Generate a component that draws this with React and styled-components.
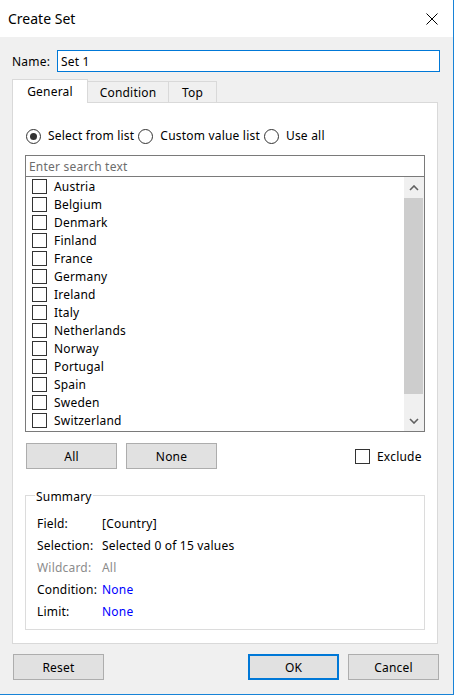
import React from 'react';
import styled, { createGlobalStyle } from 'styled-components';

const GlobalStyle = createGlobalStyle`
  * { box-sizing: border-box; }
  body {
    margin: 0;
    overflow: hidden;
    font-family: "Noto Sans", "Open Sans", sans-serif;
    font-size: 12px;
    letter-spacing: 0.2px;
    color: #000;
  }
`;

const Window = styled.div`
  width: 454px;
  height: 695px;
  display: flex;
  flex-direction: column;
  border-right: 1px solid #1883d7;
  border-bottom: 1px solid #1883d7;
  background: #f0f0f0;
`;

const TitleBar = styled.div`
  height: 37px;
  flex: none;
  background: #fff;
  display: flex;
  align-items: center;
  justify-content: space-between;
  padding: 0 15px 0 8px;
`;

const Title = styled.div`
  font-size: 14px;
  letter-spacing: 0;
  line-height: 20px;
  margin-top: 1px;
`;

const Body = styled.div`
  flex: 1;
  display: flex;
  flex-direction: column;
  padding-left: 12px;
`;

const NameRow = styled.div`
  margin-top: 13px;
  height: 22px;
  display: flex;
  align-items: center;
`;

const Label = styled.span`
  width: 45px;
  line-height: 16px;
  padding-top: 2px;
`;

const NameInput = styled.div`
  width: 383px;
  height: 22px;
  border: 1px solid #0078d7;
  background: #fff;
  padding: 1px 0 0 3px;
  line-height: 19px;
`;

const TabStrip = styled.div`
  margin-top: 7px;
  height: 24px;
  margin-bottom: -1px;
  display: flex;
  align-items: flex-end;
  position: relative;
  z-index: 1;
`;

const Tab = styled.div`
  width: ${p => p.w}px;
  height: ${p => (p.active ? 24 : 22)}px;
  margin-left: ${p => (p.first ? 0 : -1)}px;
  border: 1px solid #d9d9d9;
  border-bottom: ${p => (p.active ? 'none' : '1px solid #d9d9d9')};
  background: ${p => (p.active ? '#fff' : '#f0f0f0')};
  display: flex;
  justify-content: center;
  padding-top: ${p => (p.active ? 4 : 3)}px;
  line-height: 16px;
  position: relative;
  z-index: ${p => (p.active ? 2 : 1)};
`;

const Panel = styled.div`
  width: 426px;
  height: 542px;
  border: 1px solid #d9d9d9;
  background: #fff;
  padding-left: 12px;
  display: flex;
  flex-direction: column;
`;

const RadioRow = styled.div`
  margin-top: 25px;
  height: 16px;
  padding-left: 1px;
  display: flex;
  align-items: center;
  gap: 4px;
`;

const RadioItem = styled.label`
  display: flex;
  align-items: center;
  gap: 7px;
  line-height: 16px;
`;

const RadioCircle = styled.span`
  width: 15px;
  height: 15px;
  border-radius: 50%;
  border: 1px solid #333;
  display: flex;
  align-items: center;
  justify-content: center;

  &::after {
    content: '';
    display: ${p => (p.checked ? 'block' : 'none')};
    width: 7px;
    height: 7px;
    border-radius: 50%;
    background: #333;
  }
`;

const ListBox = styled.div`
  margin-top: 11px;
  width: 400px;
  height: 277px;
  border: 1px solid #7a7a7a;
  display: flex;
  flex-direction: column;
`;

const Search = styled.div`
  height: 21px;
  border-bottom: 1px solid #7a7a7a;
  padding: 1px 0 0 3px;
  color: #6d6d6d;
  line-height: 19px;
  flex: none;
`;

const ListArea = styled.div`
  flex: 1;
  display: flex;
  overflow: hidden;
`;

const Items = styled.div`
  flex: 1;
  overflow: hidden;
`;

const Item = styled.div`
  height: 18px;
  display: flex;
  align-items: center;
  padding-left: 6px;
  gap: 7px;
  line-height: 16px;

  & > span:last-child {
    padding-top: 2px;
  }
`;

const Check = styled.span`
  width: 15px;
  height: 15px;
  flex: none;
  border: 1px solid #333;
  background: #fff;
`;

const ScrollBar = styled.div`
  width: 20px;
  background: #f0f0f0;
  display: flex;
  flex-direction: column;
`;

const Arrow = styled.div`
  height: 21px;
  flex: none;
  display: flex;
  align-items: center;
  justify-content: center;
`;

const Track = styled.div`
  flex: 1;
`;

const Thumb = styled.div`
  height: 196px;
  width: 19px;
  background: #cdcdcd;
`;

const ButtonRow = styled.div`
  margin-top: 11px;
  height: 26px;
  padding-left: 1px;
  display: flex;
  align-items: center;
`;

const Button = styled.div`
  width: 91px;
  height: 26px;
  flex: none;
  background: #e1e1e1;
  border: ${p => (p.primary ? '2px solid #0078d7' : '1px solid #adadad')};
  display: flex;
  align-items: center;
  justify-content: center;
  padding-top: 2px;
  line-height: 16px;
  margin-left: ${p => p.ml || 0}px;
`;

const Exclude = styled.label`
  margin-left: 138px;
  display: flex;
  align-items: center;
  gap: 7px;
  line-height: 16px;

  & > span:last-child {
    padding-top: 2px;
  }
`;

const GroupBox = styled.div`
  margin-top: 26px;
  width: 400px;
  height: 135px;
  border: 1px solid #dcdcdc;
  position: relative;
  padding: 17px 0 0 11px;
`;

const Legend = styled.span`
  position: absolute;
  top: -7px;
  left: 9px;
  padding: 0 1px;
  background: #fff;
  line-height: 16px;
`;

const SummaryRow = styled.div`
  height: 22px;
  display: flex;
  align-items: center;
  line-height: 16px;
  color: ${p => (p.muted ? '#8c8c8c' : '#000')};
`;

const Key = styled.span`
  width: 65px;
  flex: none;
`;

const Value = styled.span`
  color: ${p => (p.link ? '#0000ff' : 'inherit')};
`;

const Footer = styled.div`
  margin-top: 10px;
  margin-left: 1px;
  width: 426px;
  display: flex;
  align-items: center;
`;

const countries = [
  'Austria', 'Belgium', 'Denmark', 'Finland', 'France', 'Germany', 'Ireland',
  'Italy', 'Netherlands', 'Norway', 'Portugal', 'Spain', 'Sweden',
  'Switzerland', 'United Kingdom',
];

const summary = [
  { key: 'Field:', value: '[Country]' },
  { key: 'Selection:', value: 'Selected 0 of 15 values' },
  { key: 'Wildcard:', value: 'All', muted: true },
  { key: 'Condition:', value: 'None', link: true },
  { key: 'Limit:', value: 'None', link: true },
];

const Chevron = ({ up }) => (
  <svg width="10" height="6" viewBox="0 0 10 6">
    <path
      d={up ? 'M1 5 L5 1 L9 5' : 'M1 1 L5 5 L9 1'}
      fill="none"
      stroke="#606060"
      strokeWidth="1.6"
    />
  </svg>
);

export default function App() {
  return (
    <>
      <GlobalStyle />
      <Window>
        <TitleBar>
          <Title>Create Set</Title>
          <svg width="12" height="12" viewBox="0 0 12 12">
            <path d="M0.5 0.5 L11.5 11.5 M11.5 0.5 L0.5 11.5" stroke="#000" strokeWidth="1" />
          </svg>
        </TitleBar>
        <Body>
          <NameRow>
            <Label>Name:</Label>
            <NameInput>Set 1</NameInput>
          </NameRow>
          <TabStrip>
            <Tab w={76} first active>General</Tab>
            <Tab w={82}>Condition</Tab>
            <Tab w={49}>Top</Tab>
          </TabStrip>
          <Panel>
            <RadioRow>
              <RadioItem><RadioCircle checked />Select from list</RadioItem>
              <RadioItem><RadioCircle />Custom value list</RadioItem>
              <RadioItem><RadioCircle />Use all</RadioItem>
            </RadioRow>
            <ListBox>
              <Search>Enter search text</Search>
              <ListArea>
                <Items>
                  {countries.map(c => (
                    <Item key={c}><Check /><span>{c}</span></Item>
                  ))}
                </Items>
                <ScrollBar>
                  <Arrow><Chevron up /></Arrow>
                  <Track><Thumb /></Track>
                  <Arrow><Chevron /></Arrow>
                </ScrollBar>
              </ListArea>
            </ListBox>
            <ButtonRow>
              <Button>All</Button>
              <Button ml={9}>None</Button>
              <Exclude><Check /><span>Exclude</span></Exclude>
            </ButtonRow>
            <GroupBox>
              <Legend>Summary</Legend>
              {summary.map(r => (
                <SummaryRow key={r.key} muted={r.muted}>
                  <Key>{r.key}</Key>
                  <Value link={r.link}>{r.value}</Value>
                </SummaryRow>
              ))}
            </GroupBox>
          </Panel>
          <Footer>
            <Button>Reset</Button>
            <Button primary ml={144}>OK</Button>
            <Button ml={9}>Cancel</Button>
          </Footer>
        </Body>
      </Window>
    </>
  );
}
